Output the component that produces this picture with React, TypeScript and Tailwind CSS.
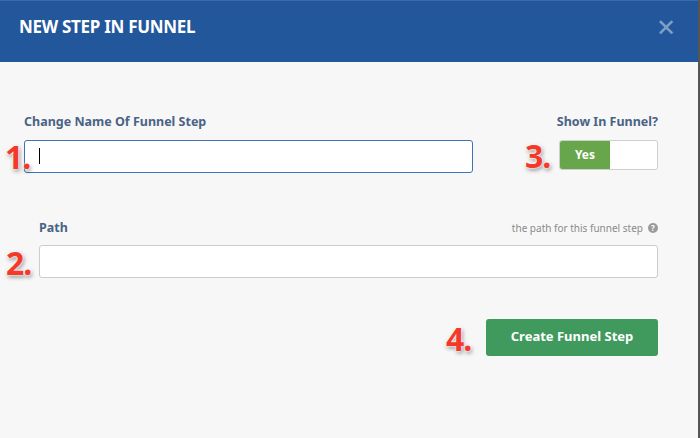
export default function App() {
  const num = 'absolute text-[32px] font-bold leading-none text-[#f4392b] [text-shadow:0_0_2px_#fff,0_0_3px_#fff,1px_2px_4px_rgba(0,0,0,0.5)] font-["Liberation_Sans",sans-serif] tracking-[-1px]'
  return (
    <div className="relative w-[700px] h-[438px] bg-[#f7f7f7] border-r-2 border-[#555] font-['Lato',sans-serif] overflow-hidden">
      {/* Header */}
      <div className="h-[62px] bg-[#23579b] flex items-center justify-between pl-[19px] pr-[22px] pb-[10px] border-t border-[#3b6aa8]">
        <h3 className="text-white text-[17px] font-bold tracking-[-0.3px]">NEW STEP IN FUNNEL</h3>
        <span className="text-[#7f9fc6] text-[24px] leading-none font-light">✕</span>
      </div>

      {/* Body */}
      <div className="pl-[24px] pr-[40px] pt-[51px] font-['Open_Sans',sans-serif]">
        <div className="flex gap-[86px]">
          <div className="flex-1">
            <label className="block text-[12.5px] font-bold text-[#4a6385] mb-[8px]">Change Name Of Funnel Step</label>
            <div className="h-[33px] bg-white border border-[#3f73b5] rounded-[3px] flex items-center pl-[14px]">
              <span className="w-px h-[16px] bg-black" />
            </div>
          </div>
          <div className="w-[99px] flex flex-col items-end">
            <label className="block text-[12.5px] font-bold text-[#4a6385] mb-[8px] whitespace-nowrap">Show In Funnel?</label>
            <div className="w-[99px] h-[30px] bg-white border border-[#cfcfcf] rounded-[3px] flex overflow-hidden">
              <div className="w-[50px] bg-[#68a64c] text-white text-[12px] font-bold flex items-center justify-center">Yes</div>
            </div>
          </div>
        </div>

        <div className="pl-[15px] mt-[46px]">
          <div className="flex items-center justify-between mb-[7px]">
            <label className="text-[12.5px] font-bold text-[#4a6385]">Path</label>
            <span className="flex items-center gap-[5px] text-[10px] text-[#8a8a8a]">
              the path for this funnel step
              <span className="w-[10px] h-[10px] rounded-full bg-[#9a9a9a] text-white text-[8px] font-bold flex items-center justify-center leading-none">?</span>
            </span>
          </div>
          <div className="h-[33px] bg-white border border-[#cccccc] rounded-[3px]" />
        </div>

        <div className="flex justify-end mt-[41px]">
          <button className="w-[172px] h-[37px] bg-[#409a5e] text-white text-[13px] font-bold rounded-[3px]">Create Funnel Step</button>
        </div>
      </div>

      {/* Annotations */}
      <span className={num + ' left-[5px] top-[141px]'}>1.</span>
      <span className={num + ' left-[6px] top-[247px]'}>2.</span>
      <span className={num + ' left-[525px] top-[140px]'}>3.</span>
      <span className={num + ' left-[446px] top-[323px]'}>4.</span>
    </div>
  )
}
